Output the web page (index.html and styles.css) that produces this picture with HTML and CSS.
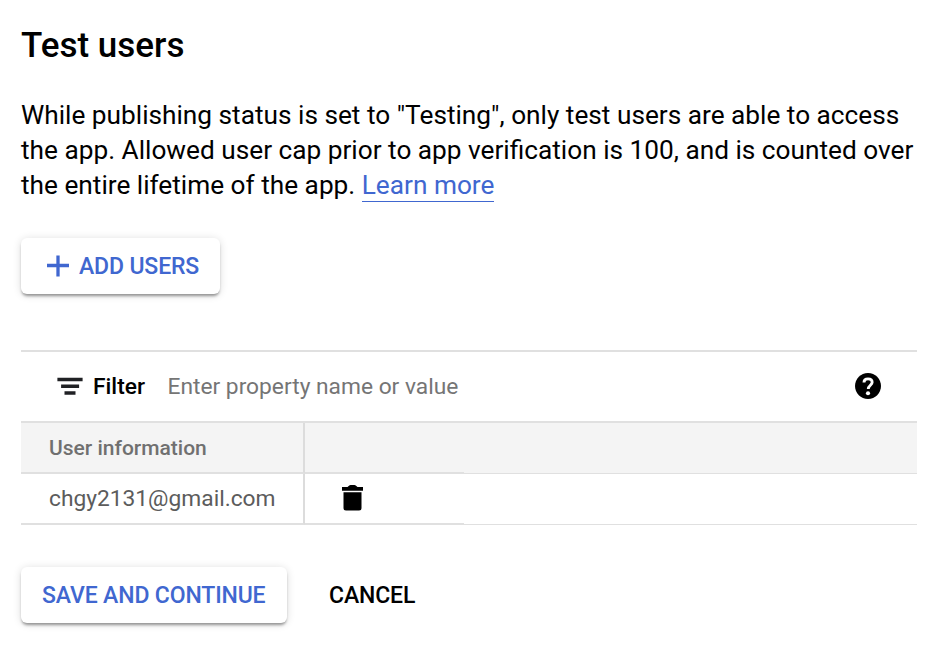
FILE: index.html
```html
<!DOCTYPE html>
<html lang="en">
<head>
<meta charset="utf-8">
<title>Test users</title>
<link rel="stylesheet" href="styles.css">
</head>
<body>
<main class="page">
  <h1 class="title">Test users</h1>
  <p class="intro">
    While publishing status is set to "Testing", only test users are able to access<br>
    the app. Allowed user cap prior to app verification is 100, and is counted over<br>
    the entire lifetime of the app. <a class="link" href="#">Learn more</a>
  </p>
  <button class="btn btn-add">
    <svg class="plus" viewBox="0 0 22 22"><path d="M11 0.500v21M0 10.500h22" stroke="currentColor" stroke-width="3.300" fill="none"/></svg>
    <span class="label">ADD USERS</span>
  </button>
  <section class="table">
    <div class="filter">
      <svg class="filter-icon" viewBox="0 0 26 18"><path d="M0.400 0.800h25.200v3.400H0.400zM4.100 7.500h18v3.400H4.100zM7.500 14.300h11v3.400H7.500z"/></svg>
      <span class="filter-label">Filter</span>
      <span class="placeholder">Enter property name or value</span>
      <svg class="help" viewBox="2 2 20 20"><path d="M12 2C6.480 2 2 6.480 2 12s4.480 10 10 10 10-4.480 10-10S17.520 2 12 2z"/><path class="mark" d="M8.900 9.300C8.900 7.200 10.200 6.500 12 6.500s3.200 1 3.200 2.700c0 2.200-3 2.400-3 5.200"/><circle class="dot" cx="12" cy="17.600" r="1.600"/></svg>
    </div>
    <div class="row head"><div class="cell">User information</div><div class="tools"></div><div class="rest"></div></div>
    <div class="row data"><div class="cell">chgy2131@gmail.com</div><div class="tools">
      <svg class="trash" viewBox="0 0 21 26"><path d="M1.500 7.200h18V23a2.500 2.500 0 0 1-2.500 2.500H4A2.500 2.500 0 0 1 1.500 23zM0 2h5.500Q7.500 0 8.500 0h4Q13.500 0 15.500 2H21v3.700H0z"/></svg>
    </div><div class="rest"></div></div>
  </section>
  <div class="actions">
    <button class="btn btn-save"><span class="label">SAVE AND CONTINUE</span></button>
    <button class="cancel"><span class="label">CANCEL</span></button>
  </div>
</main>
</body>
</html>
```
FILE: styles.css
```css
* { box-sizing: border-box; }
body { margin: 0; background: #fff; color: #000; font-family: Roboto, sans-serif; }
.page { width: 949px; height: 660px; padding: 25px 32px 0 21px; overflow: hidden; }
.title { margin: 0; font-size: 35px; line-height: 42px; font-weight: 500; }
.intro { margin: 31px 0 0; font-size: 26.22px; line-height: 35px; white-space: nowrap; }
.link { color: #4067d0; text-decoration: none; border-bottom: 1px solid #4067d0; padding-bottom: 1px; }
button { display: flex; align-items: center; height: 56px; font: 500 23px/28px Roboto, sans-serif; letter-spacing: -.14px; border: 0; background: #fff; padding: 0; white-space: nowrap; }
.label { padding-top: 1px; }
.btn { border-radius: 6px; color: #4067d0; box-shadow: 0 3px 3px -1px rgba(0,0,0,.38), 0 1px 8px rgba(0,0,0,.14); }
.btn-add { width: 199px; margin-top: 35px; padding-left: 26px; gap: 10px; }
.plus { width: 22px; height: 22px; }
.table { margin-top: 56px; border-top: 2px solid #e0e0e0; }
.filter { display: flex; align-items: center; height: 69px; padding: 0 36px; }
.filter-icon { width: 26px; height: 18px; margin: 0 10px 2px 0; fill: #202124; }
.filter-label { font-size: 22.75px; font-weight: 500; width: 74.5px; }
.placeholder { font-size: 22.75px; color: #757575; }
.help { width: 26px; height: 26px; margin: 0 0 1px auto; }
.help .mark { fill: none; stroke: #fff; stroke-width: 2.2; }
.help .dot { fill: #fff; }
.row { display: flex; color: #5c5c5c; }
.cell { width: 284px; padding-left: 28px; border-right: 2px solid #dcdcdc; border-bottom: 2px solid #e0e0e0; display: flex; align-items: center; }
.tools { width: 159px; display: flex; align-items: center; padding-left: 37px; border-bottom: 2px solid #e0e0e0; }
.rest { flex: 1; border-bottom: 1px solid #e0e0e0; }
.head { height: 53px; background: #f4f4f4; border-top: 2px solid #e0e0e0; font-size: 21px; font-weight: 500; color: #707070; }
.data { height: 51px; font-size: 22.75px; }
.trash { width: 21px; height: 26px; margin-bottom: 2px; fill: #000; }
.actions { display: flex; margin-top: 42px; gap: 42px; }
.btn-save { width: 266px; padding-left: 21px; }
.cancel { color: #000; }
```
